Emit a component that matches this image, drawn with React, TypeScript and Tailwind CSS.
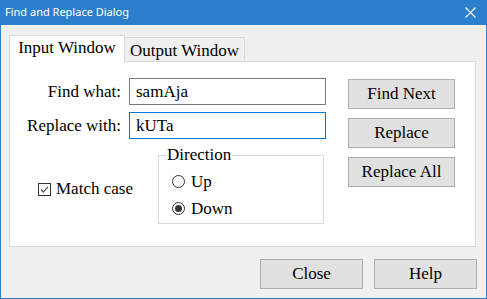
import React from "react";

const serif = { fontFamily: '"Liberation Serif", "Times New Roman", serif' };

function Radio({ checked, label }: { checked?: boolean; label: string }) {
  return (
    <div className="flex h-[27px] items-center">
      <span className="flex h-[13px] w-[13px] items-center justify-center rounded-full border border-[#333333] bg-white">
        {checked && <span className="h-[7px] w-[7px] rounded-full bg-[#333333]" />}
      </span>
      <span className="ml-[6px] text-[17px] leading-[20px] text-black">{label}</span>
    </div>
  );
}

function Btn({ label, className = "" }: { label: string; className?: string }) {
  return (
    <button
      className={`flex items-center justify-center border border-[#adadad] bg-[#e1e1e1] text-[17px] leading-[20px] text-black ${className}`}
    >
      {label}
    </button>
  );
}

export default function App() {
  return (
    <div className="flex h-[299px] w-[487px] flex-col border-x border-b border-[#2b7fcd] bg-[#f0f0f0]" style={serif}>
      <div className="-mx-px flex h-[25px] items-center justify-between bg-[#2b7fcd] pl-[5px] pr-[11px]">
        <span className="text-[11px] text-white" style={{ fontFamily: '"Noto Sans", "Open Sans", sans-serif' }}>
          Find and Replace Dialog
        </span>
        <svg width="11" height="11" viewBox="0 0 11 11">
          <path d="M0.5 0.5 L10.5 10.5 M10.5 0.5 L0.5 10.5" stroke="white" strokeWidth="1.1" fill="none" />
        </svg>
      </div>

      <div className="flex flex-col px-[8px] pt-[10px]">
        <div className="flex items-end">
          <div className="z-10 -mb-px flex h-[27px] w-[116px] items-center justify-center border border-b-0 border-[#d9d9d9] bg-white pb-[2px] text-[17px] text-black">
            Input Window
          </div>
          <div className="flex h-[24px] w-[121px] -ml-px items-center justify-center border border-b-0 border-[#d9d9d9] bg-[#f0f0f0] pt-[3px] text-[17px] text-black">
            Output Window
          </div>
        </div>

        <div className="flex h-[186px] w-[467px] items-start border border-[#d9d9d9] bg-white">
          <div className="flex flex-col">
            <div className="mt-[16px] flex h-[27px] items-center">
              <span className="w-[111px] text-right text-[17px] leading-[20px]">Find what:</span>
              <div className="ml-[8px] flex h-[27px] w-[197px] items-center border border-[#7a7a7a] bg-white pl-[6px] text-[17px]">
                samAja
              </div>
            </div>
            <div className="mt-[7px] flex h-[27px] items-center">
              <span className="w-[111px] text-right text-[17px] leading-[20px]">Replace with:</span>
              <div className="ml-[8px] flex h-[27px] w-[197px] items-center border border-[#0078d7] bg-white pl-[6px] text-[17px]">
                kUTa
              </div>
            </div>

            <div className="mt-[6px] flex items-start">
              <div className="mt-[34px] flex w-[148px] items-center pl-[28px]">
                <span className="flex h-[13px] w-[13px] items-center justify-center border border-[#333333] bg-white">
                  <svg width="11" height="11" viewBox="0 0 11 11">
                    <path d="M2 5.5 L4.3 8 L9 2.8" stroke="#555555" strokeWidth="1.2" fill="none" />
                  </svg>
                </span>
                <span className="ml-[5px] text-[17px] leading-[20px]">Match case</span>
              </div>
              <fieldset className="h-[79px] w-[166px] border border-[#dcdcdc]">
                <legend className="ml-[7px] px-px text-[17px] leading-[20px]">Direction</legend>
                <div className="mt-[3px] flex flex-col pl-[13px]">
                  <Radio label="Up" />
                  <Radio label="Down" checked />
                </div>
              </fieldset>
            </div>
          </div>

          <div className="ml-[22px] mt-[17px] flex flex-col gap-[9px]">
            <Btn label="Find Next" className="h-[30px] w-[107px]" />
            <Btn label="Replace" className="h-[30px] w-[107px]" />
            <Btn label="Replace All" className="h-[30px] w-[107px]" />
          </div>
        </div>

        <div className="mt-[12px] flex justify-end gap-[11px] pr-[1px]">
          <Btn label="Close" className="h-[30px] w-[103px]" />
          <Btn label="Help" className="h-[30px] w-[103px]" />
        </div>
      </div>
    </div>
  );
}
